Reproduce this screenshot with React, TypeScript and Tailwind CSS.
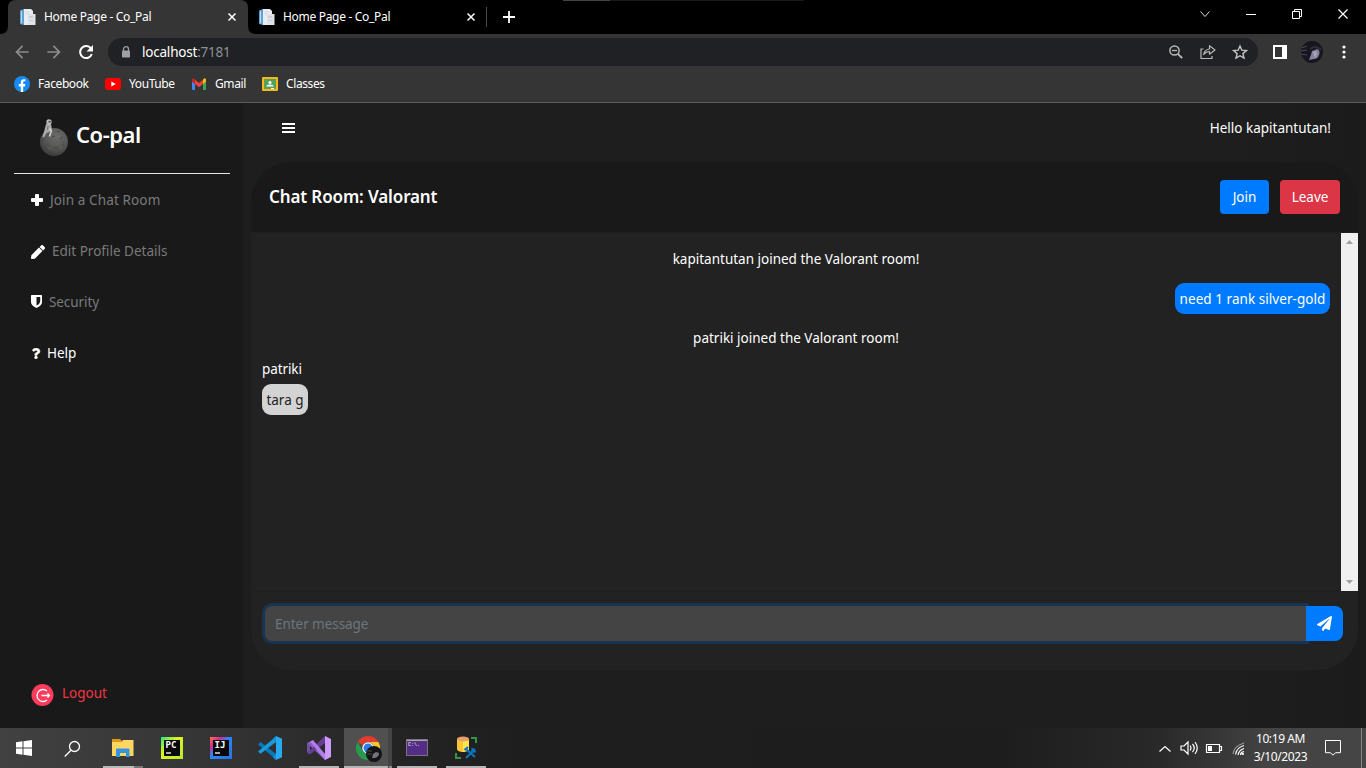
import React from 'react';
import { FaPen, FaQuestion, FaPaperPlane } from 'react-icons/fa';
import { MdArrowBack, MdArrowForward } from 'react-icons/md';

function PageIcon() {
  return (
    <svg width="16" height="16" viewBox="0 0 16 16" className="shrink-0">
      <path d="M0 1.500 4 0v16l-4-1z" fill="#5fa3d3" />
      <path d="M1 2.500 2 2v12H1z" fill="#b9dcf2" />
      <path d="M4 0h7l2 2v14H4z" fill="#e9edf1" />
      <path d="M8 5h7.500v11H8z" fill="#dfe3e8" />
      <path d="M5.500 3h4M5.500 5h3" stroke="#d3d9e0" />
      <path d="M9 7h4v2H9z" fill="#c9d1dc" />
      <path d="M9.500 11.500h4" stroke="#c6cdd6" />
    </svg>
  );
}

function CloseIcon() {
  return (
    <svg width="8" height="8" viewBox="0 0 8 8" className="shrink-0">
      <path d="m.5.500 7 7m0-7-7 7" stroke="#fff" strokeWidth="1.500" />
    </svg>
  );
}

function TabStrip() {
  return (
    <div className="relative flex h-[34px] shrink-0 bg-black">
      <svg width="256" height="34" viewBox="0 0 256 34" className="absolute top-0 left-0">
        <path d="M0 34q8 0 8-8V8q0-8 8-8h224q8 0 8 8v18q0 8 8 8z" fill="#353535" />
      </svg>
      <div className="relative ml-5 flex w-[239px] items-center">
        <PageIcon />
        <span className="ml-2 w-[184px] text-[12px] tracking-[-0.31px] text-white">Home Page - Co_Pal</span>
        <CloseIcon />
      </div>
      <div className="flex w-[227px] items-center">
        <PageIcon />
        <span className="ml-2 w-[184px] text-[12px] tracking-[-0.31px] text-white">Home Page - Co_Pal</span>
        <CloseIcon />
      </div>
      <div className="mt-[7px] h-[20px] w-px bg-[#4a4a4a]" />
      <svg width="12" height="12" viewBox="0 0 12 12" className="mt-[11px] ml-[16px]">
        <path d="M6 0v12M0 6h12" stroke="#fff" strokeWidth="1.800" />
      </svg>
      <div className="ml-[48px] flex h-px w-[241px] bg-[#191919]">
        <div className="w-[47px] bg-[#444]" />
      </div>
      <svg width="166" height="28" viewBox="1200 0 166 28" className="ml-auto" fill="none" stroke="#fff">
        <path d="m1200.500 11.500 4.500 5 4.500-5" stroke="#ddd" />
        <path d="M1246 14.500h10" />
        <path d="M1292.500 11.500h7v7h-7zM1294.500 11V9.500h7v7H1300" />
        <path d="m1338.500 9.500 9 9m0-9-9 9" strokeWidth="1.200" />
      </svg>
    </div>
  );
}

function Toolbar() {
  return (
    <div className="flex h-[36px] shrink-0 items-center">
      <MdArrowBack className="ml-[12px] size-[20px] text-[#8c8c8c]" />
      <MdArrowForward className="ml-[12px] size-[20px] text-[#8c8c8c]" />
      <svg width="20" height="20" viewBox="0 0 20 20" className="ml-[12px]">
        <path d="M15 6.600A6 6 0 1 0 15.800 12" fill="none" stroke="#fff" strokeWidth="2" />
        <path d="M17 3v6.500h-6.500z" fill="#fff" />
      </svg>
      <div className="ml-[12px] flex h-[28px] w-[1150px] items-center rounded-full bg-[#202124]">
        <svg width="10" height="12" viewBox="0 0 10 12" className="mb-px ml-[13px]">
          <path d="M2.500 5V3.200a2.500 2.500 0 0 1 5 0V5" fill="none" stroke="#9aa0a6" strokeWidth="1.300" />
          <rect x="1" y="4.500" width="8" height="7" rx=".8" fill="#9aa0a6" />
        </svg>
        <span className="mt-px ml-[11px] text-[13.5px] tracking-[-0.21px] text-[#8b9095]">
          <span className="text-white">localhost</span>:7181
        </span>
        <svg width="80" height="16" viewBox="0 0 80 16" className="ml-auto mr-[10px]" fill="none" stroke="#b8b8b8" strokeWidth="1.500">
          <circle cx="6.500" cy="6.500" r="4.600" />
          <path d="m9.800 9.800 4.400 4.400" strokeWidth="1.900" />
          <path d="M4 6.500h5" strokeWidth="1.300" />
          <path d="M35.500 5H33v9.500h11V12" strokeWidth="1.200" />
          <path d="M41.500 5V1.700L47 6l-5.500 4.200V7.500Q38 7.500 35.700 10.500 36.300 5.800 41.500 5z" strokeWidth="1.200" strokeLinejoin="round" />
          <path d="m72 2 1.800 4.200 4.600.4-3.500 3 1.100 4.500-4-2.400-4 2.400 1.100-4.500-3.500-3 4.600-.4z" stroke="#c4c4c4" strokeWidth="1.400" />
        </svg>
      </div>
      <svg width="15" height="14" viewBox="0 0 15 14" className="ml-[15px]">
        <path d="M0 0h14v14H0zM2 2v10h7V2z" fill="#fff" fillRule="evenodd" />
      </svg>
      <svg width="22" height="22" viewBox="0 0 22 22" className="ml-[13px]">
        <circle cx="11" cy="11" r="11" fill="#17161e" />
        <path d="M1 7 6 5M0 10l6-1M0 13l6 1" stroke="#4a4955" />
        <path d="M8 19c1-2 1-4 2-5l1-4 3-1 2-1c3 1 3 4 2 6-1 3-3 4-5 4z" fill="#85809b" />
        <path d="m12 11 3-1 1 3-2 4" fill="#aaa5ba" />
        <path d="M9 8c4-3 8-2 11 1" stroke="#302d3c" strokeWidth="2" fill="none" />
      </svg>
      <svg width="4" height="14" viewBox="0 0 4 14" className="ml-[19px]" fill="#fff">
        <circle cx="2" cy="2" r="1.600" />
        <circle cx="2" cy="7" r="1.600" />
        <circle cx="2" cy="12" r="1.600" />
      </svg>
    </div>
  );
}

function Bookmarks() {
  return (
    <div className="flex h-[33px] shrink-0 items-start border-b border-[#5c5c5c] pt-[4px] pl-[14px] text-[12px] leading-[20px] tracking-[-0.4px] text-white">
      <div className="flex w-[91px]">
        <svg width="16" height="16" viewBox="0 0 16 16" className="mt-[2px]">
          <circle cx="8" cy="8" r="8" fill="#168bf3" />
          <path d="M6.800 16v-5.600h-2V8h2V6.300C6.800 4.300 8 3.200 9.700 3.200l1.700.1v2h-1C9.400 5.300 9.200 5.800 9.200 6.500V8h2.100l-.4 2.400H9.200V16z" fill="#fff" />
        </svg>
        <span className="ml-[8px]">Facebook</span>
      </div>
      <div className="flex w-[86px]">
        <svg width="16" height="12" viewBox="0 0 16 12" className="mt-[4px]">
          <rect width="16" height="12" rx="3" fill="#f00" />
          <path d="m6.300 3.500 4.500 2.500-4.500 2.500z" fill="#fff" />
        </svg>
        <span className="ml-[8px]">YouTube</span>
      </div>
      <div className="flex w-[71px]">
        <svg width="16" height="12" viewBox="0 0 16 12" className="mt-[4px]">
          <path d="M1 1.500h3V12H2q-1 0-1-1z" fill="#4285f4" />
          <path d="M12 3h3v8q0 1-1 1h-2z" fill="#34a853" />
          <path d="M12 1.500 13.500.3q1.500-.5 1.500 1.500v2l-3 2.300z" fill="#fbbc04" />
          <path d="M4 1.800 8 5l4-3.200v4.300L8 9.200 4 6.100z" fill="#ea4335" />
          <path d="M1 1.800Q1 0 2.500.3L4 1.800v4.300L1 3.800z" fill="#c5221f" />
        </svg>
        <span className="ml-[8px]">Gmail</span>
      </div>
      <div className="flex">
        <svg width="16" height="14" viewBox="0 0 16 14" className="mt-[3px]">
          <rect width="16" height="14" rx="1" fill="#f5ba15" />
          <path d="M2 2h12v10H2z" fill="#57a05c" />
          <circle cx="8" cy="5.500" r="1.500" fill="#fff" />
          <path d="M4.500 9.500q0-2 3.500-2t3.500 2z" fill="#fff" />
          <path d="M9 11h3v1H9z" fill="#fff" />
        </svg>
        <span className="ml-[8px]">Classes</span>
      </div>
    </div>
  );
}

function MoonLogo() {
  return (
    <svg width="30" height="37" viewBox="0 0 30 37">
      <defs>
        <radialGradient id="moon" cx=".6" cy=".3" r=".75">
          <stop offset="0" stopColor="#6c6c6a" />
          <stop offset=".6" stopColor="#545453" />
          <stop offset="1" stopColor="#383838" />
        </radialGradient>
      </defs>
      <circle cx="14" cy="23" r="14" fill="url(#moon)" />
      <path d="m4 27 3-2 3 2M13 29l4-1 2 2M20 20l3-2M12 18l3-1M22 26l2-1M10 33l3-1M17 12l3 1" stroke="#484848" fill="none" />
      <path d="m15 20 3 2M20 30l2-2M8 29l2 1" stroke="#646462" fill="none" />
      <path d="m6 5 5 0 1 5.500-2.500 2.500-3 1-2.500 4.500-1.500-.5 2-7z" fill="#a8acaa" />
      <circle cx="9" cy="3" r="2.700" fill="#b7b9b8" />
      <path d="M8.500 2h2.500v1.500H8.500z" fill="#555" />
      <path d="m9.500 9.500 2 2.500-1 2.500-1 3" stroke="#d1d1cf" strokeWidth="1.600" fill="none" />
      <path d="m8 7-.5 4" stroke="#777" />
    </svg>
  );
}

function Sidebar() {
  return (
    <aside className="flex w-[243px] shrink-0 flex-col bg-[#191919] text-[13.5px] leading-[20px] text-[#797979]">
      <div className="mr-[13px] ml-[14px] flex h-[71px] border-b border-[#e5e5e5] pt-[16px] pl-[26px]">
        <MoonLogo />
        <span className="-mt-px ml-[6px] text-[22px] leading-[32px] font-semibold tracking-[-0.45px] text-white">Co-pal</span>
      </div>
      <div className="mt-[16px] flex h-[51px] items-start pl-[31px]">
        <svg width="12" height="12" viewBox="0 0 12 12" className="mt-[4px]">
          <path d="M5 0h2q1 0 1 1v3h3q1 0 1 1v2q0 1-1 1H8v3q0 1-1 1H5q-1 0-1-1V8H1Q0 8 0 7V5q0-1 1-1h3V1q0-1 1-1z" fill="#fff" />
        </svg>
        <span className="ml-[7px] tracking-[0.12px]">Join a Chat Room</span>
      </div>
      <div className="flex h-[51px] items-start pl-[31px]">
        <FaPen className="mt-[4px] size-[14px] text-white" />
        <span className="ml-[7px]">Edit Profile Details</span>
      </div>
      <div className="flex h-[51px] items-start pl-[31px]">
        <svg width="11" height="13" viewBox="0 0 11 13" className="mt-[3px]">
          <path d="M.7 0h9.600q.7 0 .7.700V7q0 3.500-5.500 6Q0 10.500 0 7V.7Q0 0 .7 0zm4.800 2v8.600Q9.200 8.500 9.200 6.500V2z" fill="#fff" fillRule="evenodd" />
        </svg>
        <span className="ml-[7px] tracking-[-0.08px]">Security</span>
      </div>
      <div className="flex h-[51px] items-start pl-[31px] text-white">
        <FaQuestion className="mt-[5px] h-[11px] w-[10px]" stroke="#fff" strokeWidth="24" />
        <span className="ml-[6px]">Help</span>
      </div>
      <div className="mt-auto mb-[22px] flex h-[22px] items-center pl-[31px] text-[#f43643]">
        <svg width="23" height="22" viewBox="0 0 23 22">
          <circle cx="11.500" cy="11" r="11" fill="#fc3c5c" />
          <path d="M16 7a6 6 0 1 0 0 9M10.500 11.500h8m-2-2 2 2-2 2" fill="none" stroke="#fff" strokeWidth="1.300" />
        </svg>
        <span className="mb-[4px] ml-[8px]">Logout</span>
      </div>
    </aside>
  );
}

function ChatCard() {
  return (
    <section className="mx-[8px] flex h-[508px] flex-col overflow-hidden rounded-[40px] bg-[#222]">
      <header className="flex h-[71px] shrink-0 items-center border-b border-[#1f1f1f] bg-[#191919] pr-[18px] pl-[18px]">
        <h1 className="text-[17px] font-semibold tracking-[-0.12px] text-white">Chat Room: Valorant</h1>
        <button className="ml-auto h-[34px] w-[49px] rounded-[4px] bg-[#007bff] pt-px text-[13.5px] text-white">Join</button>
        <button className="ml-[11px] h-[34px] w-[60px] rounded-[4px] bg-[#dc3545] pt-px text-[13.5px] text-white">Leave</button>
      </header>
      <div className="flex h-[358px] shrink-0 text-[13.5px] leading-[20px] text-white">
        <div className="flex flex-1 flex-col px-[11px]">
          <p className="mt-[16px] text-center">kapitantutan joined the Valorant room!</p>
          <div className="mt-[14px] flex h-[31px] w-[155px] items-center justify-center self-end rounded-[9px] bg-[#007bff] tracking-[0.05px] whitespace-nowrap">
            need 1 rank silver-gold
          </div>
          <p className="mt-[14px] text-center">patriki joined the Valorant room!</p>
          <p className="mt-[11px] tracking-[-0.1px]">patriki</p>
          <div className="mt-[5px] flex h-[31px] w-[46px] items-center justify-center rounded-[9px] bg-[#d3d3d3] whitespace-nowrap text-[#212121]">
            tara g
          </div>
        </div>
        <div className="flex w-[17px] flex-col items-center justify-between bg-[#f0f0f0] py-[7px]">
          <svg width="7" height="4" viewBox="0 0 7 4"><path d="m0 4 3.500-4L7 4z" fill="#a0a0a0" /></svg>
          <svg width="7" height="4" viewBox="0 0 7 4"><path d="m0 0 3.500 4L7 0z" fill="#a0a0a0" /></svg>
        </div>
      </div>
      <div className="flex flex-1 items-start border-t border-[#1f1f1f] pt-[14px] pl-[14px]">
        <div className="flex h-[35px] w-[1041px] shrink-0 items-center rounded-l-[7px] bg-[#444] pt-[2px] pl-[10px] text-[13.5px] tracking-[-0.05px] text-[#6c757d] shadow-[0_0_0_3px_#193451]">
          Enter message
        </div>
        <button className="relative flex h-[35px] w-[37px] items-center justify-center rounded-r-[8px] bg-[#007bff]">
          <FaPaperPlane className="size-[15px] text-white" />
        </button>
      </div>
    </section>
  );
}

function JetBrainsIcon({ letters, kind }: { letters: string; kind: 'pc' | 'ij' }) {
  return (
    <svg width="22" height="22" viewBox="0 0 22 22">
      <defs>
        <linearGradient id="pc" x2="1" y2="1"><stop offset="0" stopColor="#27e87e" /><stop offset=".4" stopColor="#dcf31f" /><stop offset="1" stopColor="#b7e832" /></linearGradient>
        <linearGradient id="ij" x2="1" y2="1"><stop offset="0" stopColor="#ff754d" /><stop offset=".25" stopColor="#d42b8d" /><stop offset=".45" stopColor="#2788ff" /><stop offset="1" stopColor="#2b70df" /></linearGradient>
      </defs>
      <rect width="22" height="22" fill={kind === 'pc' ? 'url(#pc)' : 'url(#ij)'} />
      <rect x="3" y="3" width="16" height="16" fill="#080808" />
      <text x="4.500" y="11" fill="#fff" fontFamily="DejaVu Sans Mono, monospace" fontSize="9" fontWeight="bold">{letters}</text>
      <path d="M5 15h5v2H5z" fill="#aaa" />
    </svg>
  );
}

function Taskbar() {
  return (
    <footer className="flex h-[40px] shrink-0 bg-[linear-gradient(90deg,#414141_0%,#333_17%,#242424_29%,#1e1e1e_38%,#1d1d1d_73%,#292929_85%,#444_93%,#454545_100%)]">
      <div className="flex w-[48px] items-center justify-center">
        <svg width="16" height="16" viewBox="0 0 16 16" fill="#fff"><path d="M0 2.300 6.500 1.300v6.200H0zM7.500 1.200 16 0v7.500H7.500zM0 8.500h6.500v6.200L0 13.800zM7.500 8.500H16V16l-8.500-1.200z" /></svg>
      </div>
      <div className="flex w-[48px] items-center justify-center">
        <svg width="17" height="17" viewBox="0 0 17 17" fill="none" stroke="#fff" strokeWidth="1.300"><circle cx="10.500" cy="6.500" r="5" /><path d="M7 10.300.7 16.500" /></svg>
      </div>
      <div className="ml-[7px] flex w-[40px] flex-col items-center justify-between pt-[11px]">
        <svg width="22" height="18" viewBox="0 0 22 18"><path d="M0 0h8l2 2h11v4H0z" fill="#dc9b12" /><path d="M0 3h10l1-2h10.500v16H0z" fill="#ffd563" /><path d="M4 10.500q0-1 1-1h11.500q1 0 1 1V18H14v-4H8v4H4z" fill="#3394df" /></svg>
        <div className="flex h-[2px] w-full bg-[#777]"><div className="w-[31px] bg-[#b9b9b9]" /></div>
      </div>
      <div className="ml-[8px] flex w-[42px] items-center justify-center"><JetBrainsIcon letters="PC" kind="pc" /></div>
      <div className="ml-[8px] flex w-[40px] items-center justify-center"><JetBrainsIcon letters="IJ" kind="ij" /></div>
      <div className="ml-[9px] flex w-[40px] items-center justify-center">
        <svg width="24" height="24" viewBox="0 0 24 24"><path d="M0 8.500 2.500 6 18 18v5.500z" fill="#0577bd" /><path d="m0 15.500 2.500 2.300L18 6V.500z" fill="#169bdc" /><path d="M18 0 24 2.800v18.400L18 24z" fill="#27a9ef" /><path d="m18 0-3 2.500L18 7zm0 24-3-2.500L18 17z" fill="#168fd0" /></svg>
      </div>
      <div className="ml-[9px] flex w-[40px] flex-col items-center justify-between pt-[8px]">
        <svg width="24" height="24" viewBox="0 0 24 24"><path d="M0 7 3 5.500 18 18v6z" fill="#865fc0" /><path d="M0 7v10l3-2V9z" fill="#71519f" /><path d="M0 17 18 0v7L3 18.500z" fill="#673c95" /><path d="M3 5.500 6 4l12 14v6z" fill="#b17eea" /><path d="m18 0 6 3v18l-6 3z" fill="#cc9afc" /></svg>
        <div className="h-[2px] w-full bg-[#b5b5b5]" />
      </div>
      <div className="ml-[5px] flex h-[40px] w-[48px] bg-[#444]">
        <div className="flex w-[44px] flex-col items-end justify-between bg-[#505050] pt-[8px]">
          <svg width="26" height="26" viewBox="0 0 26 26" className="mr-[6px]">
            <path d="M1.600 6A12 12 0 0 1 22.400 6H12a6 6 0 0 0-5.200 3z" fill="#e33b2e" />
            <path d="M1.600 6A12 12 0 0 0 12 24l5.200-9a6 6 0 0 1-10.400 0z" fill="#259b4b" />
            <path d="M22.400 6A12 12 0 0 1 12 24l5.200-9A6 6 0 0 0 12 6z" fill="#fcc62d" />
            <circle cx="12" cy="12" r="5.700" fill="#fff" /><circle cx="12" cy="12" r="4.500" fill="#2d7de9" />
            <circle cx="18" cy="18" r="8" fill="#141416" /><path d="M11 15h5m-5 3h5" stroke="#47484a" /><path d="M16 22l1-4 3-2 3 1q0 4-4 5z" fill="#77727e" />
          </svg>
          <div className="h-[2px] w-full bg-[#b5b5b5]" />
        </div>
        <div className="mt-auto ml-px h-[2px] w-[3px] bg-[#8b8b8b]" />
      </div>
      <div className="ml-[5px] flex w-[40px] flex-col items-center justify-between pt-[11px]">
        <svg width="22" height="17" viewBox="0 0 22 17"><rect x=".5" y=".5" width="21" height="16" fill="#542d87" stroke="#76727e" /><path d="M1 1h20v1H1z" fill="#aaa" /><text x="2" y="7" fill="#fff" fontFamily="Liberation Mono, monospace" fontSize="5">C:\.</text></svg>
        <div className="h-[2px] w-full bg-[#b5b5b5]" />
      </div>
      <div className="ml-[9px] flex w-[40px] flex-col items-center justify-between pt-[8px]">
        <svg width="22" height="23" viewBox="0 0 22 23"><path d="M2 3v10c0 4 12 4 12 0V3z" fill="#fbc535" /><path d="M8 5h6v9l-6 2z" fill="#ffe451" /><ellipse cx="8" cy="3" rx="6" ry="2.500" fill="#e9a16b" /><path d="M16 2h5v5M1 17v5h5" fill="none" stroke="#359448" strokeWidth="2" /><path d="m11 13 9 8M20 13l-9 9" stroke="#0875bf" strokeWidth="2.200" /><path d="m9.500 14 3.500-3M17.500 12v3.500H21" stroke="#0875bf" strokeWidth="2.200" fill="none" /></svg>
        <div className="h-[2px] w-full bg-[#b5b5b5]" />
      </div>
      <svg width="90" height="40" viewBox="1157 728 90 40" className="ml-auto" fill="none" stroke="#fff" strokeWidth="1.200">
        <path d="m1159.500 751.500 5.500-5 5.500 5" />
        <path d="M1181 746h3l4-4v12l-4-4h-3zM1190 745.500q2 2.500 0 5M1192.500 744q3.500 4 0 8M1195 742q4.500 6 0 12" />
        <path d="M1206.500 744.500h13v8h-13zM1220 746.500h1.500v4H1220" /><path d="M1208 746h4v5h-4z" fill="#fff" stroke="none" />
        <path d="M1233 754q1-8 11-11" stroke="#999" /><path d="M1235.500 754.500q1-7 8.500-9" /><path d="M1238 755q1-5 6-6.500M1240.500 755q0-3 3.500-3.500" /><circle cx="1242.700" cy="753.700" r="1.300" fill="#fff" stroke="none" />
      </svg>
      <div className="mr-px flex w-[67px] flex-col items-center pt-[2px] text-[12px] leading-[18px] tracking-[-0.4px] text-white"><span>10:19 AM</span><span>3/10/2023</span></div>
      <svg width="16" height="16" viewBox="0 0 16 16" className="mt-[12px] ml-[10px]" fill="none" stroke="#fff"><path d="M.5.500h15v12.200h-5L8 15.200l-2.500-2.500h-5z" /></svg>
      <div className="ml-[20px] w-px bg-[#858585]" />
      <div className="w-[4px]" />
    </footer>
  );
}

export default function App() {
  return (
    <div className="flex h-[768px] w-[1366px] flex-col overflow-hidden bg-[#353535] font-['Noto_Sans',sans-serif]">
      <TabStrip />
      <Toolbar />
      <Bookmarks />
      <main className="flex h-[625px] shrink-0 bg-[linear-gradient(90deg,#1e1e1e_90%,#1b1b1b_100%)]">
        <Sidebar />
        <div className="flex w-[1123px] flex-col">
          <nav className="flex h-[59px] shrink-0 items-start pt-[15px] pr-[35px] pl-[39px] text-[13.5px] leading-[20px] text-white">
            <svg width="13" height="10" viewBox="0 0 13 10" className="mt-[5px]">
              <path d="M0 0h13v2H0zM0 4h13v2H0zM0 8h13v2H0z" fill="#fff" />
            </svg>
            <span className="ml-auto">Hello kapitantutan!</span>
          </nav>
          <ChatCard />
        </div>
      </main>
      <Taskbar />
    </div>
  );
}
